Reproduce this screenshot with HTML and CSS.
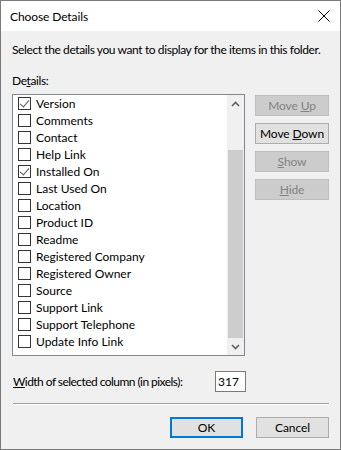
FILE: index.html
```html
<!DOCTYPE html>
<html lang="en">
<head>
    <meta charset="UTF-8">
    <title>Choose Details</title>
    <link rel="stylesheet" href="styles.css">
</head>
<body>
    <div class="window">
        <!-- Title bar -->
        <div class="titlebar">
            <span class="title">Choose Details</span>
            <svg class="close" width="12" height="12" viewBox="0 0 12 12">
                <path d="M0.5 0.5 L11.5 11.5 M11.5 0.5 L0.5 11.5" stroke="#000" stroke-width="1" fill="none"/>
            </svg>
        </div>

        <div class="content">
            <p class="intro">Select the details you want to display for the items in this folder.</p>
            <div class="label">De<u>t</u>ails:</div>

            <div class="main">
                <div class="listbox">
                    <ul class="items">
                        <li><span class="check on"></span>Version</li>
                        <li><span class="check"></span>Comments</li>
                        <li><span class="check"></span>Contact</li>
                        <li><span class="check"></span>Help Link</li>
                        <li><span class="check on"></span>Installed On</li>
                        <li><span class="check"></span>Last Used On</li>
                        <li><span class="check"></span>Location</li>
                        <li><span class="check"></span>Product ID</li>
                        <li><span class="check"></span>Readme</li>
                        <li><span class="check"></span>Registered Company</li>
                        <li><span class="check"></span>Registered Owner</li>
                        <li><span class="check"></span>Source</li>
                        <li><span class="check"></span>Support Link</li>
                        <li><span class="check"></span>Support Telephone</li>
                        <li><span class="check"></span>Update Info Link</li>
                    </ul>
                    <div class="scrollbar">
                        <div class="arrow">
                            <svg width="9" height="6" viewBox="0 0 9 6"><path d="M1 5 L4.5 1.5 L8 5" stroke="#606060" stroke-width="1.6" fill="none"/></svg>
                        </div>
                        <div class="track"><div class="thumb"></div></div>
                        <div class="arrow">
                            <svg width="9" height="6" viewBox="0 0 9 6"><path d="M1 1 L4.5 4.5 L8 1" stroke="#606060" stroke-width="1.6" fill="none"/></svg>
                        </div>
                    </div>
                </div>

                <div class="side">
                    <button class="btn" disabled>Move <u>U</u>p</button>
                    <button class="btn">Move <u>D</u>own</button>
                    <button class="btn" disabled><u>S</u>how</button>
                    <button class="btn" disabled><u>H</u>ide</button>
                </div>
            </div>

            <div class="width-row">
                <span class="width-label"><u>W</u>idth of selected column (in pixels):</span>
                <div class="num">317</div>
            </div>

            <div class="separator"></div>

            <div class="footer">
                <button class="btn default">OK</button>
                <button class="btn">Cancel</button>
            </div>
        </div>
    </div>
</body>
</html>
```

FILE: styles.css
```css
body {
    margin: 0;
    padding: 0;
    font-family: Lato, "Noto Sans", sans-serif;
    font-size: 12px;
    letter-spacing: -0.4px;
    color: #000;
    background: #fff;
}

u {
    text-decoration: underline;
    text-underline-offset: 1px;
}

.window {
    width: 341px;
    height: 450px;
    box-sizing: border-box;
    border: 1px solid #7a7a7a;
    display: flex;
    flex-direction: column;
    white-space: nowrap;
}

/* Title bar */
.titlebar {
    flex: none;
    height: 30px;
    background: #fff;
    display: flex;
    align-items: center;
    justify-content: space-between;
    padding: 0 10px 0 9px;
}

.title {
    font-size: 12px;
    line-height: 15px;
    letter-spacing: -0.1px;
}

.close {
    display: block;
}

/* Dialog body */
.content {
    flex: 1;
    background: #f0f0f0;
    padding: 0 11px;
}

.intro {
    margin: 11px 0 0;
    line-height: 15px;
}

.label {
    margin-top: 16px;
    line-height: 15px;
}

.main {
    display: flex;
    align-items: flex-start;
    gap: 10px;
    margin-top: 6px;
}

.listbox {
    width: 234px;
    height: 262px;
    box-sizing: border-box;
    border: 1px solid #828790;
    background: #fff;
    display: flex;
}

.items {
    list-style: none;
    margin: 0;
    padding: 0;
    flex: 1;
}

.items li {
    height: 17px;
    display: flex;
    align-items: center;
    gap: 5px;
    padding-left: 5px;
    line-height: 17px;
    letter-spacing: 0;
}

.check {
    width: 13px;
    height: 13px;
    box-sizing: border-box;
    border: 1px solid #333;
    background: #fff;
    flex: none;
    position: relative;
}

.check.on::after {
    content: "";
    position: absolute;
    left: 3px;
    top: 0px;
    width: 4px;
    height: 8px;
    border-right: 1.5px solid #555;
    border-bottom: 1.5px solid #555;
    transform: rotate(40deg);
}

/* Scrollbar */
.scrollbar {
    width: 17px;
    background: #f0f0f0;
    display: flex;
    flex-direction: column;
}

.arrow {
    height: 17px;
    display: flex;
    align-items: center;
    justify-content: center;
}

.track {
    flex: 1;
    display: flex;
    flex-direction: column;
    justify-content: flex-end;
}

.thumb {
    height: 188px;
    background: #cdcdcd;
    margin: 0 1px;
}

/* Buttons */
.side {
    display: flex;
    flex-direction: column;
    gap: 7px;
    margin-top: 1px;
}

.btn {
    font-family: inherit;
    font-size: 12px;
    letter-spacing: -0.1px;
    width: 74px;
    height: 21px;
    padding: 0;
    margin: 0;
    box-sizing: border-box;
    border: 1px solid #adadad;
    background: #e1e1e1;
    color: #000;
    border-radius: 0;
}

.btn:disabled {
    background: #cccccc;
    border-color: #bfbfbf;
    color: #838383;
}

.btn.default {
    border: 2px solid #0078d7;
}

.width-row {
    display: flex;
    align-items: center;
    justify-content: space-between;
    margin-top: 15px;
    width: 233px;
    padding-left: 1px;
}

.width-label {
    letter-spacing: -0.55px;
}

.num {
    width: 31px;
    height: 21px;
    box-sizing: border-box;
    border: 1px solid #7a7a7a;
    background: #fff;
    text-align: right;
    padding-right: 6px;
    line-height: 19px;
    letter-spacing: 0;
}

.separator {
    margin-top: 11px;
    width: 316px;
    margin-left: 1px;
    border-top: 1px solid #a0a0a0;
    border-bottom: 1px solid #fff;
}

.footer {
    display: flex;
    justify-content: flex-end;
    gap: 13px;
    margin-top: 12px;
}

.footer .btn {
    width: 73px;
}
```
